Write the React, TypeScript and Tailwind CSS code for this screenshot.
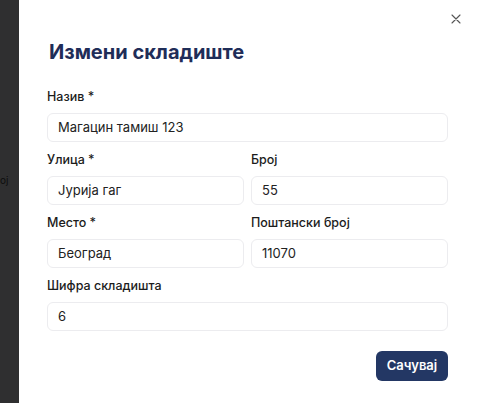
import React from "react";

function Field({ label, value }: { label: string; value: string }) {
  return (
    <div className="flex flex-col gap-[6px]">
      <label className="text-[12.5px] leading-[20px] font-medium text-[#1c1c1c]">{label}</label>
      <div className="h-[29px] rounded-[6px] border border-[#ececef] bg-white flex items-center px-[10px] text-[13px] text-[#222]">
        {value}
      </div>
    </div>
  );
}

export default function App() {
  return (
    <div className="w-[482px] h-[403px] flex bg-white overflow-hidden" style={{ fontFamily: "Inter, 'Noto Sans', sans-serif" }}>
      <div className="w-[19px] h-full bg-[#2f2f30] relative shrink-0 overflow-hidden">
        <span className="absolute left-0 top-[173px] text-[10px] leading-[14px] text-[#0d0d0d]">ој</span>
      </div>
      <div className="flex-1 relative bg-white pt-[38px] pl-[28px] pr-[34px]">
        <button className="absolute right-[20px] top-[13px] w-[12px] h-[12px] flex items-center justify-center text-[#555]">
          <svg width="10" height="10" viewBox="0 0 10 10" fill="none" stroke="currentColor" strokeWidth="1.1" strokeLinecap="round">
            <path d="M1 1 L9 9 M9 1 L1 9" />
          </svg>
        </button>
        <h2 className="text-[20px] leading-[28px] font-bold text-[#1f2d58] pl-[2px]">Измени складиште</h2>
        <div className="mt-[21px] flex flex-col gap-[8px]">
          <Field label="Назив *" value="Магацин тамиш 123" />
          <div className="grid grid-cols-2 gap-[7px]">
            <Field label="Улица *" value="Јурија гаг" />
            <Field label="Број" value="55" />
          </div>
          <div className="grid grid-cols-2 gap-[7px]">
            <Field label="Место *" value="Београд" />
            <Field label="Поштански број" value="11070" />
          </div>
          <Field label="Шифра складишта" value="6" />
        </div>
        <div className="flex justify-end mt-[20px]">
          <button className="h-[30px] w-[72px] rounded-[6px] bg-[#233764] text-white text-[13px] font-semibold">Сачувај</button>
        </div>
      </div>
    </div>
  );
}
